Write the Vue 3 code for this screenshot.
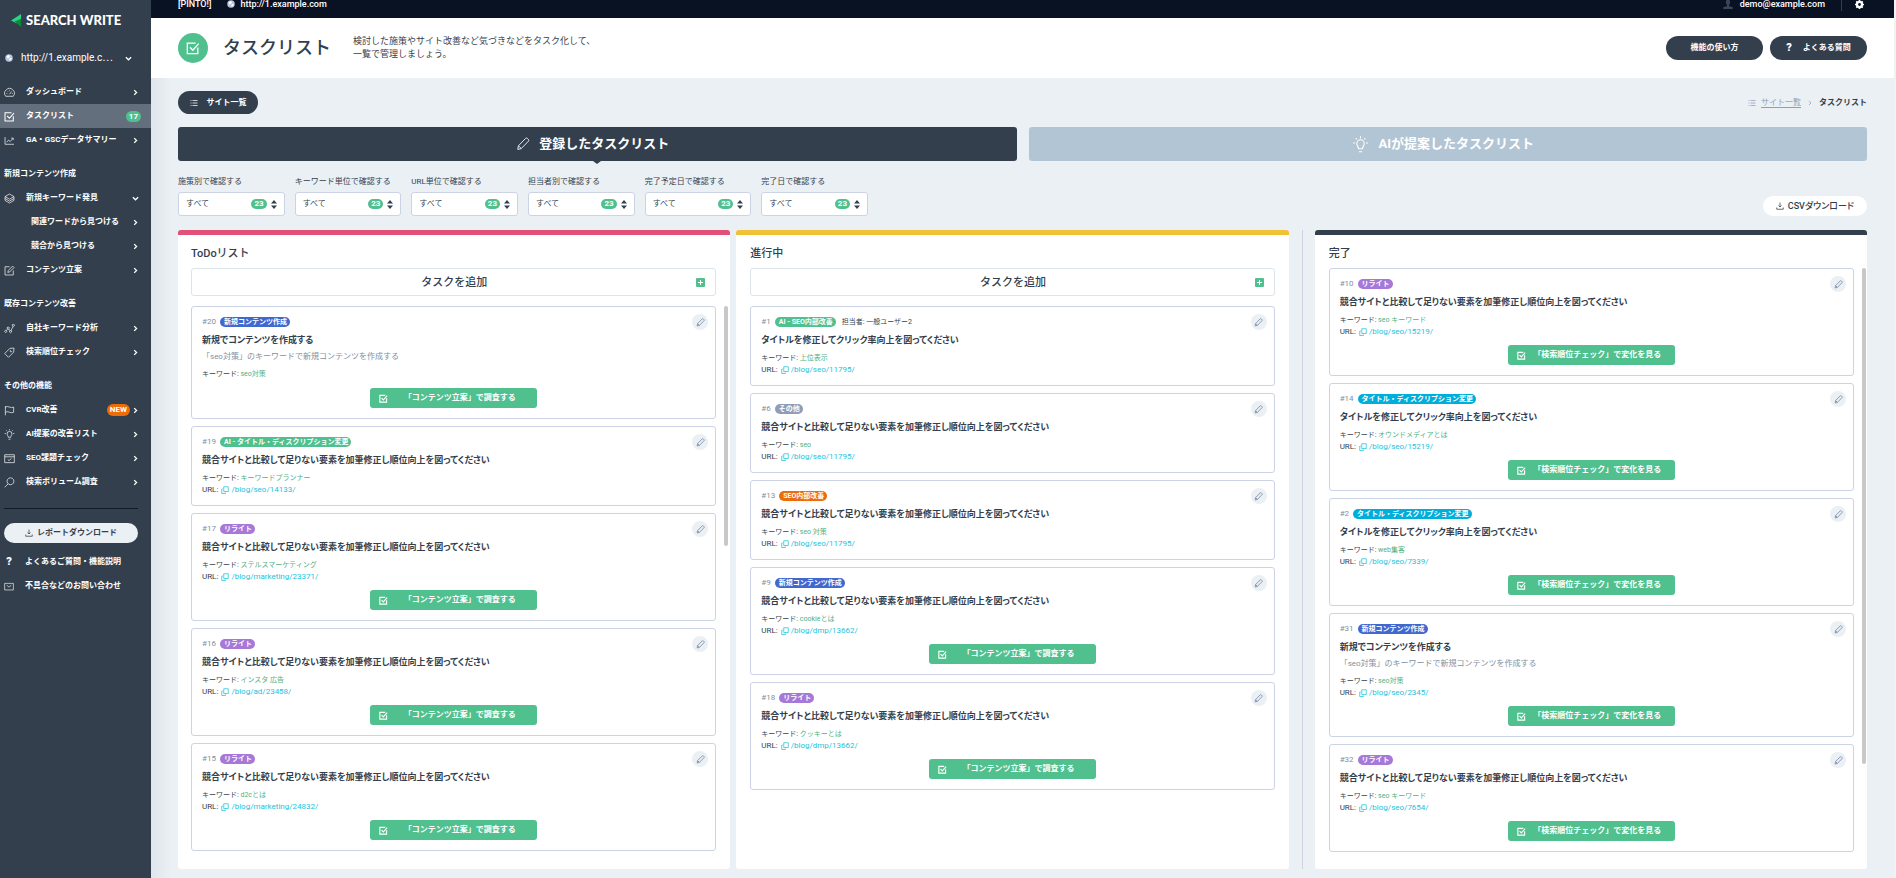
<script setup>
const icons = {
  gauge: 'M2.5 13.5A7 7 0 1 1 13.5 13.5ZM8 10.5L11 6.5M3.5 9.5H4.8M11.5 9.5H12.7M5 5.8L5.8 6.6M8 4.2V5.4',
  check: 'M13.5 7.5V14.5H1.5V2.5H11M4.5 7.2L7.8 10.5L14.5 3',
  chart: 'M1.5 3V13.5H14.5M4 10.5L6.5 7.5L9 9.5L13 5M10.5 4.5H13.4V7.4',
  layers: 'M8 1.5L14.5 5.2L8 9L1.5 5.2ZM1.5 8L8 11.8L14.5 8M1.5 10.8L8 14.6L14.5 10.8M1.5 5.2V10.8M14.5 5.2V10.8',
  compose: 'M13.5 8V14.5H1.5V2.5H8M5.5 10.8L6.3 8L12.5 1.6L14.6 3.7L8.4 10Z',
  nodes: 'M2.5 10.5a1.6 1.6 0 1 0 .1 0M6 6a1.5 1.5 0 1 0 .1 0M9.5 11a1.5 1.5 0 1 0 .1 0M13.5 2a1.5 1.5 0 1 0 .1 0M3.3 10.8L5.4 8.8M6.8 8.8L8.8 11.2M10.2 11L13 5',
  tag: 'M8.5 2L14.5 1.5L14 7.5L6.5 15L1 9.5ZM10 4.8a1.2 1.2 0 1 0 1.4 1.2',
  flag: 'M2 1.5V15M2 3Q5 1.5 8 3T14 3V10.5Q11 12 8 10.5T2 10.5',
  bulb: 'M6.2 12C6.2 10 4.5 9.4 4.5 7A3.5 3.5 0 0 1 11.5 7C11.5 9.4 9.8 10 9.8 12ZM6.5 14.8H9.5M8 0.3V2M3.4 2L4.5 3.1M12.6 2L11.5 3.1M1 6.5H2.8M13.2 6.5H15',
  panel: 'M1 2.5H15V14H1ZM1 5.5H15M5.5 9.3L7.5 11.2L10.8 7.6',
  search: 'M9.5 1.2A5 5 0 1 1 9.4 1.2M6 10L1 15',
  mail: 'M1 3H15V13.5H1ZM4.5 6L8 9L11.5 6',
  download: 'M8 1V10M5 7L8 10L11 7M1.5 11V14.5H14.5V11',
  list: 'M1 3H3M5 3H15M1 8H3M5 8H15M1 13H3M5 13H15',
  pencil: 'M2 14.2L2.8 10L11 1.6Q12 0.8 13 1.6L14.2 2.8Q15 3.8 14.2 4.8L6 13.2ZM2.8 10L6 13.2',
  copy: 'M5.5 1.5H14.5V11H5.5ZM3.5 6H1.5V15H9V13',
  right: 'M5 2.5L10.5 8L5 13.5',
  down: 'M2 5L8 11L14 5',
}

const navTop = [
  { icon: 'gauge', label: 'ダッシュボード', arrow: 'right' },
  { icon: 'check', label: 'タスクリスト', count: 17, active: true },
  { icon: 'chart', label: 'GA・GSCデータサマリー', arrow: 'right' },
]
const navGroups = [
  {
    title: '新規コンテンツ作成',
    items: [
      { icon: 'layers', label: '新規キーワード発見', arrow: 'down' },
      { sub: true, label: '関連ワードから見つける', arrow: 'right' },
      { sub: true, label: '競合から見つける', arrow: 'right' },
      { icon: 'compose', label: 'コンテンツ立案', arrow: 'right' },
    ],
  },
  {
    title: '既存コンテンツ改善',
    items: [
      { icon: 'nodes', label: '自社キーワード分析', arrow: 'right' },
      { icon: 'tag', label: '検索順位チェック', arrow: 'right' },
    ],
  },
  {
    title: 'その他の機能',
    items: [
      { icon: 'flag', label: 'CVR改善', isNew: true, arrow: 'right' },
      { icon: 'bulb', label: 'AI提案の改善リスト', arrow: 'right' },
      { icon: 'panel', label: 'SEO課題チェック', arrow: 'right' },
      { icon: 'search', label: '検索ボリューム調査', arrow: 'right' },
    ],
  },
]
const groups = [{ items: navTop }, ...navGroups]

const filters = ['施策別で確認する', 'キーワード単位で確認する', 'URL単位で確認する', '担当者別で確認する', '完了予定日で確認する', '完了日で確認する']

const rewrite = '競合サイトと比較して足りない要素を加筆修正し順位向上を図ってください'
const click = 'タイトルを修正してクリック率向上を図ってください'
const create = '新規でコンテンツを作成する'
const createDesc = '「seo対策」のキーワードで新規コンテンツを作成する'
const plan = '「コンテンツ立案」で調査する'
const rank = '「検索順位チェック」で変化を見る'

const columns = [
  {
    title: 'ToDoリスト', tone: 'pink', add: true, thumb: 44,
    cards: [
      { id: 20, tag: '新規コンテンツ作成', color: 'blue', title: create, desc: createDesc, kw: 'seo対策', action: plan },
      { id: 19, tag: 'AI - タイトル・ディスクリプション変更', color: 'green', title: rewrite, kw: 'キーワードプランナー', url: '/blog/seo/14133/' },
      { id: 17, tag: 'リライト', color: 'purple', title: rewrite, kw: 'ステルスマーケティング', url: '/blog/marketing/23371/', action: plan },
      { id: 16, tag: 'リライト', color: 'purple', title: rewrite, kw: 'インスタ 広告', url: '/blog/ad/23458/', action: plan },
      { id: 15, tag: 'リライト', color: 'purple', title: rewrite, kw: 'd2cとは', url: '/blog/marketing/24832/', action: plan },
    ],
  },
  {
    title: '進行中', tone: 'yellow', add: true, thumb: 0,
    cards: [
      { id: 1, tag: 'AI - SEO内部改善', color: 'green', owner: '担当者: 一般ユーザー2', title: click, kw: '上位表示', url: '/blog/seo/11795/' },
      { id: 6, tag: 'その他', color: 'gray', title: rewrite, kw: 'seo', url: '/blog/seo/11795/' },
      { id: 13, tag: 'SEO内部改善', color: 'orange', title: rewrite, kw: 'seo 対策', url: '/blog/seo/11795/' },
      { id: 9, tag: '新規コンテンツ作成', color: 'blue', title: rewrite, kw: 'cookieとは', url: '/blog/dmp/13662/', action: plan },
      { id: 18, tag: 'リライト', color: 'purple', title: rewrite, kw: 'クッキーとは', url: '/blog/dmp/13662/', action: plan },
    ],
  },
  {
    title: '完了', tone: 'dark', thumb: 85,
    cards: [
      { id: 10, tag: 'リライト', color: 'purple', title: rewrite, kw: 'seo キーワード', url: '/blog/seo/15219/', action: rank },
      { id: 14, tag: 'タイトル・ディスクリプション変更', color: 'cyan', title: click, kw: 'オウンドメディアとは', url: '/blog/seo/15219/', action: rank },
      { id: 2, tag: 'タイトル・ディスクリプション変更', color: 'cyan', title: click, kw: 'web集客', url: '/blog/seo/7339/', action: rank },
      { id: 31, tag: '新規コンテンツ作成', color: 'blue', title: create, desc: createDesc, kw: 'seo対策', url: '/blog/seo/2345/', action: rank },
      { id: 32, tag: 'リライト', color: 'purple', title: rewrite, kw: 'seo キーワード', url: '/blog/seo/7654/', action: rank },
    ],
  },
]
</script>

<template>
  <div class="layout">
    <aside class="sidebar">
      <a class="logo" href="#">
        <svg viewBox="0 0 12 14"><path d="M11 0L0 7L6 10L11 7Z" fill="#2fd183" /><path d="M11 5L4 8L11 14Z" fill="#0c8a3c" /></svg>
        <span>SEARCH WRITE</span>
      </a>
      <button class="site" type="button">
        <svg class="globe" viewBox="0 0 16 16"><circle cx="8" cy="8" r="7.5" fill="#b9c3e0" /><path d="M3 5L7 2L10 4L8 8L5 9ZM10 8L14 9L11 13L8 12Z" fill="#fff" /></svg>
        <span class="site-name">http://1.example.c⋯</span>
        <svg class="ico chev" viewBox="0 0 16 16"><path :d="icons.down" /></svg>
      </button>
      <nav>
        <section v-for="(g, i) in groups" :key="i" class="group">
          <h2 v-if="g.title">{{ g.title }}</h2>
          <a v-for="n in g.items" :key="n.label" href="#" class="item" :class="{ active: n.active, sub: n.sub }">
            <svg v-if="n.icon" class="ico nav-ico" viewBox="0 0 16 16"><path :d="icons[n.icon]" /></svg>
            <span class="label">{{ n.label }}</span>
            <span v-if="n.isNew" class="new">NEW</span>
            <span v-if="n.count" class="count">{{ n.count }}</span>
            <svg v-if="n.arrow" class="ico chev" viewBox="0 0 16 16"><path :d="icons[n.arrow]" /></svg>
          </a>
        </section>
      </nav>
      <hr />
      <button class="report" type="button">
        <svg class="ico" viewBox="0 0 16 16"><path :d="icons.download" /></svg>レポートダウンロード
      </button>
      <a href="#" class="item help"><b class="q">?</b><span class="label">よくあるご質問・機能説明</span></a>
      <a href="#" class="item help"><svg class="ico nav-ico" viewBox="0 0 16 16"><path :d="icons.mail" /></svg><span class="label">不具合などのお問い合わせ</span></a>
    </aside>

    <div class="main">
      <div class="topbar">
        <span>[PINTO!]</span>
        <span class="top-site">
          <svg class="globe" viewBox="0 0 16 16"><circle cx="8" cy="8" r="7.5" fill="#b9c3e0" /><path d="M3 5L7 2L10 4L8 8L5 9ZM10 8L14 9L11 13L8 12Z" fill="#fff" /></svg>
          http://1.example.com
        </span>
        <span class="user">
          <svg viewBox="0 0 16 16"><path d="M8 1C11 1 11.5 3 11.3 5.5Q11 8.5 9.5 9.5V11L15.5 13V16H.5V13L6.5 11V9.5Q5 8.5 4.7 5.5C4.500 3 5 1 8 1Z" fill="#3a4658" /></svg>
          demo@example.com
        </span>
        <button class="gear" type="button" aria-label="設定">
          <svg viewBox="0 0 16 16"><circle cx="8" cy="8" r="4.500" fill="none" stroke="#fff" stroke-width="4" /><path d="M8 0V3M8 13V16M0 8H3M13 8H16M2.300 2.300L4.400 4.400M11.600 11.600L13.700 13.700M2.300 13.700L4.400 11.600M11.600 4.400L13.700 2.300" stroke="#fff" stroke-width="3" /></svg>
        </button>
      </div>

      <header class="head">
        <span class="badge"><svg class="ico" viewBox="0 0 16 16"><path :d="icons.check" /></svg></span>
        <h1>タスクリスト</h1>
        <p>検討した施策やサイト改善など気づきなどをタスク化して、<br />一覧で管理しましょう。</p>
        <div class="head-actions">
          <button class="pill" type="button">機能の使い方</button>
          <button class="pill" type="button"><b class="q">?</b>よくある質問</button>
        </div>
      </header>

      <main class="content">
        <div class="crumb-row">
          <button class="pill sites" type="button"><svg class="ico" viewBox="0 0 16 16"><path :d="icons.list" /></svg>サイト一覧</button>
          <nav class="crumbs">
            <svg class="ico" viewBox="0 0 16 16"><path :d="icons.list" /></svg>
            <a href="#">サイト一覧</a>
            <svg class="ico sep" viewBox="0 0 16 16"><path :d="icons.right" /></svg>
            <b>タスクリスト</b>
          </nav>
        </div>

        <div class="tabs">
          <button class="tab on" type="button"><svg class="ico" viewBox="0 0 16 16"><path :d="icons.pencil" /></svg>登録したタスクリスト</button>
          <button class="tab" type="button"><svg class="ico bulb" viewBox="0 0 16 16"><path :d="icons.bulb" /></svg>AIが提案したタスクリスト</button>
        </div>

        <div class="filter-row">
          <div class="filters">
            <div v-for="(f, i) in filters" :key="f" class="filter">
              <label :for="'filter-' + i">{{ f }}</label>
              <div class="select">
                <select :id="'filter-' + i"><option>すべて</option></select>
                <span class="hint">
                  <span class="num">23</span>
                  <svg viewBox="0 0 6 9"><path d="M0 3.500L3 0L6 3.500ZM0 5.500L3 9L6 5.500Z" fill="#343f4e" /></svg>
                </span>
              </div>
            </div>
          </div>
          <button class="csv" type="button"><svg class="ico" viewBox="0 0 16 16"><path :d="icons.download" /></svg>CSVダウンロード</button>
        </div>

        <div class="board">
          <section v-for="c in columns" :key="c.title" class="column" :class="c.tone">
            <h2>{{ c.title }}</h2>
            <button v-if="c.add" class="add" type="button">
              <span>タスクを追加</span>
              <svg viewBox="0 0 9 9"><rect width="9" height="9" rx="1" fill="#50c08e" /><path d="M4.500 2V7M2 4.500H7" stroke="#fff" /></svg>
            </button>
            <div class="list">
              <div class="cards">
                <article v-for="t in c.cards" :key="t.id" class="card">
                  <div class="meta">
                    <span class="id">#{{ t.id }}</span>
                    <span class="tag" :class="t.color">{{ t.tag }}</span>
                    <span v-if="t.owner" class="owner">{{ t.owner }}</span>
                  </div>
                  <h3>{{ t.title }}</h3>
                  <p v-if="t.desc" class="desc">{{ t.desc }}</p>
                  <div class="kw">キーワード: <span>{{ t.kw }}</span></div>
                  <div v-if="t.url" class="url">URL: <a href="#"><svg class="ico" viewBox="0 0 16 16"><path :d="icons.copy" /></svg>{{ t.url }}</a></div>
                  <button v-if="t.action" class="action" type="button">
                    <svg class="ico" viewBox="0 0 16 16"><path :d="icons.check" /></svg>
                    <span>{{ t.action }}</span>
                  </button>
                  <button class="edit" type="button" aria-label="編集"><svg class="ico" viewBox="0 0 16 16"><path :d="icons.pencil" /></svg></button>
                </article>
              </div>
              <div class="rail"><div class="thumb" :style="{ height: c.thumb + '%' }"></div></div>
            </div>
          </section>
        </div>
      </main>
    </div>
  </div>
</template>

<style>
body {
  background: #ebf0f4;
}
</style>

<style scoped>
* {
  box-sizing: border-box;
}
.layout {
  display: flex;
  min-height: 100vh;
  padding-right: 2px;
  background: #f1f2f4;
  color: #343f4e;
  font: 8px/12px Roboto, "Noto Sans CJK JP", sans-serif;
}
button,
select {
  margin: 0;
  padding: 0;
  border: 0;
  background: none;
  color: inherit;
  font: inherit;
  white-space: nowrap;
}
h1, h2, h3, p {
  margin: 0;
}
a {
  color: inherit;
  text-decoration: none;
}
svg {
  flex: none;
  display: block;
}
.ico {
  width: 8px;
  height: 8px;
  fill: none;
  stroke: currentColor;
  stroke-width: 1.5;
}
.globe {
  width: 8px;
  height: 8px;
}
.q {
  font-size: 11px;
}

/* sidebar */
.sidebar {
  flex: none;
  width: 151px;
  background: #343f4e;
  color: #fff;
}
.logo {
  display: flex;
  align-items: center;
  gap: 4px;
  height: 40px;
  padding-left: 11px;
  font: 900 13px/16px Lato, sans-serif;
  white-space: nowrap;
}
.logo svg {
  width: 11px;
  height: 13px;
}
.site {
  display: flex;
  align-items: center;
  width: 100%;
  height: 36px;
  padding: 0 20px 0 5px;
  font-size: 10px;
  text-align: left;
}
.site-name {
  flex: 1;
  padding-left: 8px;
}
nav .group:first-child {
  padding-top: 4px;
}
.group {
  padding-bottom: 10px;
}
.group h2 {
  padding-left: 4px;
  font-size: 8px;
  line-height: 24px;
}
.item {
  display: flex;
  align-items: center;
  height: 24px;
  padding: 0 13px 0 4px;
  font-weight: 700;
  white-space: nowrap;
}
.item.active {
  padding-right: 10px;
  background: #646f7e;
}
.item.sub {
  padding-left: 9px;
}
.nav-ico {
  width: 11px;
  height: 11px;
  stroke-width: 1;
}
.active .nav-ico {
  stroke-width: 1.5;
}
.label {
  flex: 1;
  padding-left: 11px;
}
.sub .label {
  padding-left: 22px;
}
.chev {
  width: 7px;
  height: 7px;
  margin-right: -1px;
  stroke-width: 3;
}
.count,
.num {
  height: 11px;
  padding: 0 3px;
  border-radius: 6px;
  background: #50c08e;
  color: #fff;
  font-size: 8px;
  font-weight: 700;
  line-height: 11px;
}
.new {
  height: 12px;
  margin-right: 2px;
  padding: 0 3px;
  border-radius: 6px;
  background: #ec6c0a;
  line-height: 12px;
}
hr {
  height: 1px;
  margin: 4px 13px 14px 4px;
  border: 0;
  background: #101a2a;
}
.report {
  display: flex;
  align-items: center;
  justify-content: center;
  gap: 4px;
  width: 134px;
  height: 20px;
  margin: 0 13px 7px 4px;
  border-radius: 10px;
  background: #ebf0f4;
  color: #343f4e;
  font-weight: 700;
}
.help .q {
  width: 10px;
  text-align: center;
}
.help .nav-ico {
  width: 10px;
}

/* top */
.main {
  flex: 1;
  min-width: 0;
  background: #ebf0f4;
}
.topbar {
  display: flex;
  align-items: flex-end;
  gap: 16px;
  height: 18px;
  padding: 0 27px 7px;
  overflow: hidden;
  background: #081223;
  color: #fff;
  font-size: 9px;
  font-weight: 500;
  line-height: 14px;
}
.top-site,
.user {
  display: flex;
  align-items: center;
  gap: 5px;
}
.user {
  gap: 7px;
  margin-left: auto;
}
.user svg {
  width: 10px;
  height: 10px;
}
.gear {
  height: 14px;
  margin-right: 3px;
  padding-left: 13px;
  border-left: 1px solid #343f4e;
}
.gear svg {
  width: 9px;
  height: 9px;
}
.head {
  display: flex;
  align-items: center;
  height: 60px;
  padding: 0 27px;
  background: #fff;
}
.badge {
  display: flex;
  align-items: center;
  justify-content: center;
  width: 30px;
  height: 30px;
  border-radius: 50%;
  background: #50c08e;
  color: #fff;
}
.badge .ico {
  width: 14px;
  height: 14px;
}
h1 {
  padding: 0 22px 0 15px;
  font-size: 18px;
  font-weight: 500;
  line-height: 30px;
}
.head p {
  font-size: 9px;
  line-height: 13px;
}
.head-actions {
  display: flex;
  gap: 7px;
  margin-left: auto;
}
.pill {
  display: flex;
  align-items: center;
  justify-content: center;
  gap: 11px;
  width: 97px;
  height: 24px;
  border-radius: 12px;
  background: #343f4e;
  color: #fff;
  font-weight: 700;
}
.sites {
  gap: 9px;
  width: 80px;
  height: 23px;
}

/* content */
.content {
  padding: 13px 27px 9px;
  background: linear-gradient(90deg, #e1e5ed, #ebf0f4 20px);
}
.crumb-row {
  display: flex;
  align-items: center;
  justify-content: space-between;
}
.crumbs {
  display: flex;
  align-items: center;
  gap: 5px;
}
.crumbs > .ico,
.crumbs a {
  color: #8f9db5;
}
.crumbs a {
  text-decoration: underline;
  text-underline-offset: 2px;
}
.crumbs .sep {
  width: 6px;
  height: 6px;
  margin: 0 1px;
  stroke-width: 2;
}
.tabs {
  display: grid;
  grid-template-columns: 1fr 1fr;
  gap: 12px;
  margin: 13px 0 15px;
}
.tab {
  position: relative;
  display: flex;
  align-items: center;
  justify-content: center;
  gap: 9px;
  height: 34px;
  padding-right: 9px;
  border-radius: 3px;
  background: #b2c5d5;
  color: #fff;
  font-size: 13px;
  font-weight: 700;
}
.tab .ico {
  width: 14px;
  height: 14px;
  stroke-width: 1;
}
.tab .bulb {
  width: 17px;
  height: 17px;
}
.tab.on {
  background: #343f4e;
}
.tab.on::after {
  content: "";
  position: absolute;
  top: 100%;
  left: 50%;
  margin-left: -4px;
  border: 4px solid transparent;
  border-top: 3px solid #343f4e;
  border-bottom: 0;
}
.filter-row {
  display: flex;
  align-items: flex-end;
  justify-content: space-between;
  margin-bottom: 14px;
}
.filters {
  display: grid;
  grid-template-columns: repeat(6, 1fr);
  gap: 10px;
  width: 690px;
}
.filter label {
  display: block;
  margin-bottom: 4px;
  white-space: nowrap;
}
.select {
  position: relative;
}
select {
  display: block;
  width: 100%;
  height: 24px;
  padding: 0 7px;
  border: 1px solid #ccd3e4;
  border-radius: 3px;
  background: #fff;
  appearance: none;
}
.hint {
  position: absolute;
  top: 7px;
  right: 8px;
  display: flex;
  align-items: center;
  gap: 4px;
  pointer-events: none;
}
.hint svg {
  width: 6px;
  height: 9px;
}
.num {
  height: 10px;
  line-height: 10px;
}
.csv {
  display: flex;
  align-items: center;
  gap: 4px;
  height: 20px;
  padding: 0 13px;
  border-radius: 10px;
  background: #fff;
  font-size: 9px;
  font-weight: 500;
  font-feature-settings: "palt";
}

/* board */
.board {
  display: grid;
  grid-template-columns: 1fr 1fr calc((100% - 32px) / 3 + 20px);
  gap: 6px;
}
.column {
  padding: 10px 2px 17px 14px;
  border-top: 5px solid;
  border-radius: 3px;
  background: #fff;
}
.pink {
  padding-left: 13px;
  border-top-color: #e05078;
}
.yellow {
  border-top-color: #f1c137;
}
.dark {
  position: relative;
  margin-left: 20px;
  padding-right: 1px;
  border-top-color: #343f4e;
}
.dark::before {
  content: "";
  position: absolute;
  top: -5px;
  bottom: 0;
  left: -13px;
  width: 1px;
  background: #ccd3e4;
}
.column h2 {
  margin-bottom: 5px;
  font-size: 11px;
  font-weight: 500;
  line-height: 18px;
}
.add {
  display: flex;
  align-items: center;
  width: calc(100% - 12px);
  height: 28px;
  margin-bottom: 10px;
  padding: 0 10px;
  border: 1px solid #dce4ec;
  border-radius: 3px;
  font-size: 11px;
  font-weight: 500;
}
.add span {
  flex: 1;
  padding: 1px 0 0 10px;
}
.add svg {
  width: 9px;
  height: 9px;
}
.list {
  display: flex;
  gap: 8px;
}
.cards {
  flex: 1;
  min-width: 0;
  display: flex;
  flex-direction: column;
  gap: 7px;
}
.rail {
  width: 4px;
}
.thumb {
  border-radius: 2px;
  background: #c8c8c8;
}
.card {
  position: relative;
  padding: 7px 10px 10px;
  border: 1px solid #ccd3e4;
  border-radius: 3px;
}
.meta {
  display: flex;
  align-items: center;
  gap: 4px;
  height: 15px;
}
.id {
  color: #8290a3;
}
.tag {
  height: 10px;
  padding: 0 3px 0 4px;
  border-radius: 5px;
  color: #fff;
  font-size: 7px;
  font-weight: 700;
  line-height: 10px;
}
.blue { background: #4068cf; }
.green { background: #50c08e; }
.purple { background: #a678d8; }
.gray { background: #8f9db5; }
.orange { background: #ec6c0a; }
.cyan { background: #00aedb; }
.owner {
  padding-left: 2px;
  font-size: 7px;
}
.card h3 {
  margin-top: 2px;
  font-size: 9px;
  font-weight: 700;
  font-feature-settings: "palt";
  line-height: 18px;
}
.desc {
  color: #8290a3;
  line-height: 16px;
}
.kw {
  margin-top: 4px;
  font-size: 7px;
  line-height: 11px;
}
.kw span {
  color: #50b080;
}
.url {
  display: flex;
  align-items: center;
  gap: 3px;
  line-height: 11px;
}
.url a {
  display: flex;
  align-items: center;
  gap: 2px;
  color: #1cc3dc;
}
.action {
  display: flex;
  align-items: center;
  width: 167px;
  height: 20px;
  margin: 8px auto 0;
  padding: 0 6px 0 9px;
  border-radius: 3px;
  background: #50c08e;
  color: #fff;
  font-weight: 700;
}
.action .ico {
  width: 9px;
  height: 9px;
  stroke-width: 2;
}
.action span {
  flex: 1;
}
.edit {
  position: absolute;
  top: 7px;
  right: 7px;
  display: flex;
  align-items: center;
  justify-content: center;
  width: 16px;
  height: 16px;
  border-radius: 50%;
  background: #ebf0f4;
  color: #7c8aa5;
}
.edit .ico {
  width: 9px;
  height: 9px;
}
</style>
